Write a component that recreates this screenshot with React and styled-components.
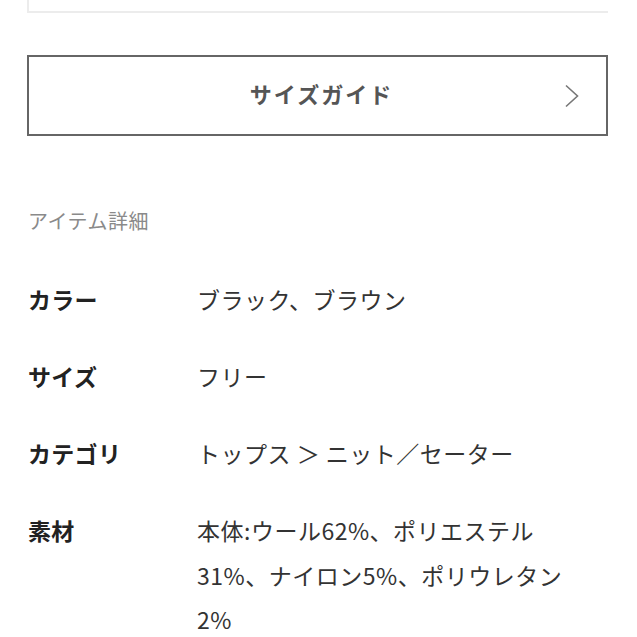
import React from 'react';
import styled, { createGlobalStyle } from 'styled-components';

const Global = createGlobalStyle`
  html, body {
    margin: 0;
    padding: 0;
    background: #fff;
  }
  body {
    font-family: "Noto Sans CJK JP", "Noto Sans", sans-serif;
  }
`;

const Page = styled.div`
  padding: 0 29px 0 27px;
`;

const TopBox = styled.div`
  height: 11px;
  border-left: 2px solid #ececec;
  border-bottom: 2px solid #ececec;
`;

const GuideButton = styled.button`
  margin-top: 42px;
  width: 100%;
  height: 81px;
  box-sizing: border-box;
  border: 2px solid #666;
  background: #fff;
  display: flex;
  align-items: center;
  justify-content: center;
  position: relative;
  font-family: inherit;
  font-size: 22px;
  font-weight: 700;
  letter-spacing: 2px;
  color: #555;
  padding: 0 0 5px 8px;
`;

const Chevron = styled.svg`
  position: absolute;
  right: 26px;
  top: 50%;
  transform: translateY(-50%);
`;

const SectionTitle = styled.h2`
  margin: 69px 0 0 1px;
  font-size: 20px;
  font-weight: 400;
  color: #8a8a8a;
  letter-spacing: 0.5px;
  line-height: 32px;
`;

const List = styled.dl`
  margin: 40px 0 0;
  display: flex;
  flex-direction: column;
  gap: 32.5px;
`;

const Row = styled.div`
  display: grid;
  grid-template-columns: 170px 1fr;
`;

const Label = styled.dt`
  margin: 0;
  padding-left: 1px;
  font-size: 23px;
  font-weight: 700;
  color: #222;
  line-height: 44.5px;
  letter-spacing: 0.3px;
`;

const Value = styled.dd`
  margin: 0;
  font-size: 23px;
  font-weight: 400;
  color: #333;
  line-height: 44.5px;
  letter-spacing: 0.5px;
  max-width: 385px;
`;

const details = [
  ['カラー', 'ブラック、ブラウン'],
  ['サイズ', 'フリー'],
  ['カテゴリ', 'トップス ＞ ニット／セーター'],
  ['素材', '本体:ウール62%、ポリエステル31%、ナイロン5%、ポリウレタン2%'],
];

export default function App() {
  return (
    <>
      <Global />
      <Page>
        <TopBox />
        <GuideButton>
          サイズガイド
          <Chevron width="16" height="24" viewBox="0 0 16 24">
            <path d="M2 1.5 L13.5 12 L2 22.5" fill="none" stroke="#777" strokeWidth="1.6" />
          </Chevron>
        </GuideButton>
        <SectionTitle>アイテム詳細</SectionTitle>
        <List>
          {details.map(([k, v]) => (
            <Row key={k}>
              <Label>{k}</Label>
              <Value>{v}</Value>
            </Row>
          ))}
        </List>
      </Page>
    </>
  );
}
